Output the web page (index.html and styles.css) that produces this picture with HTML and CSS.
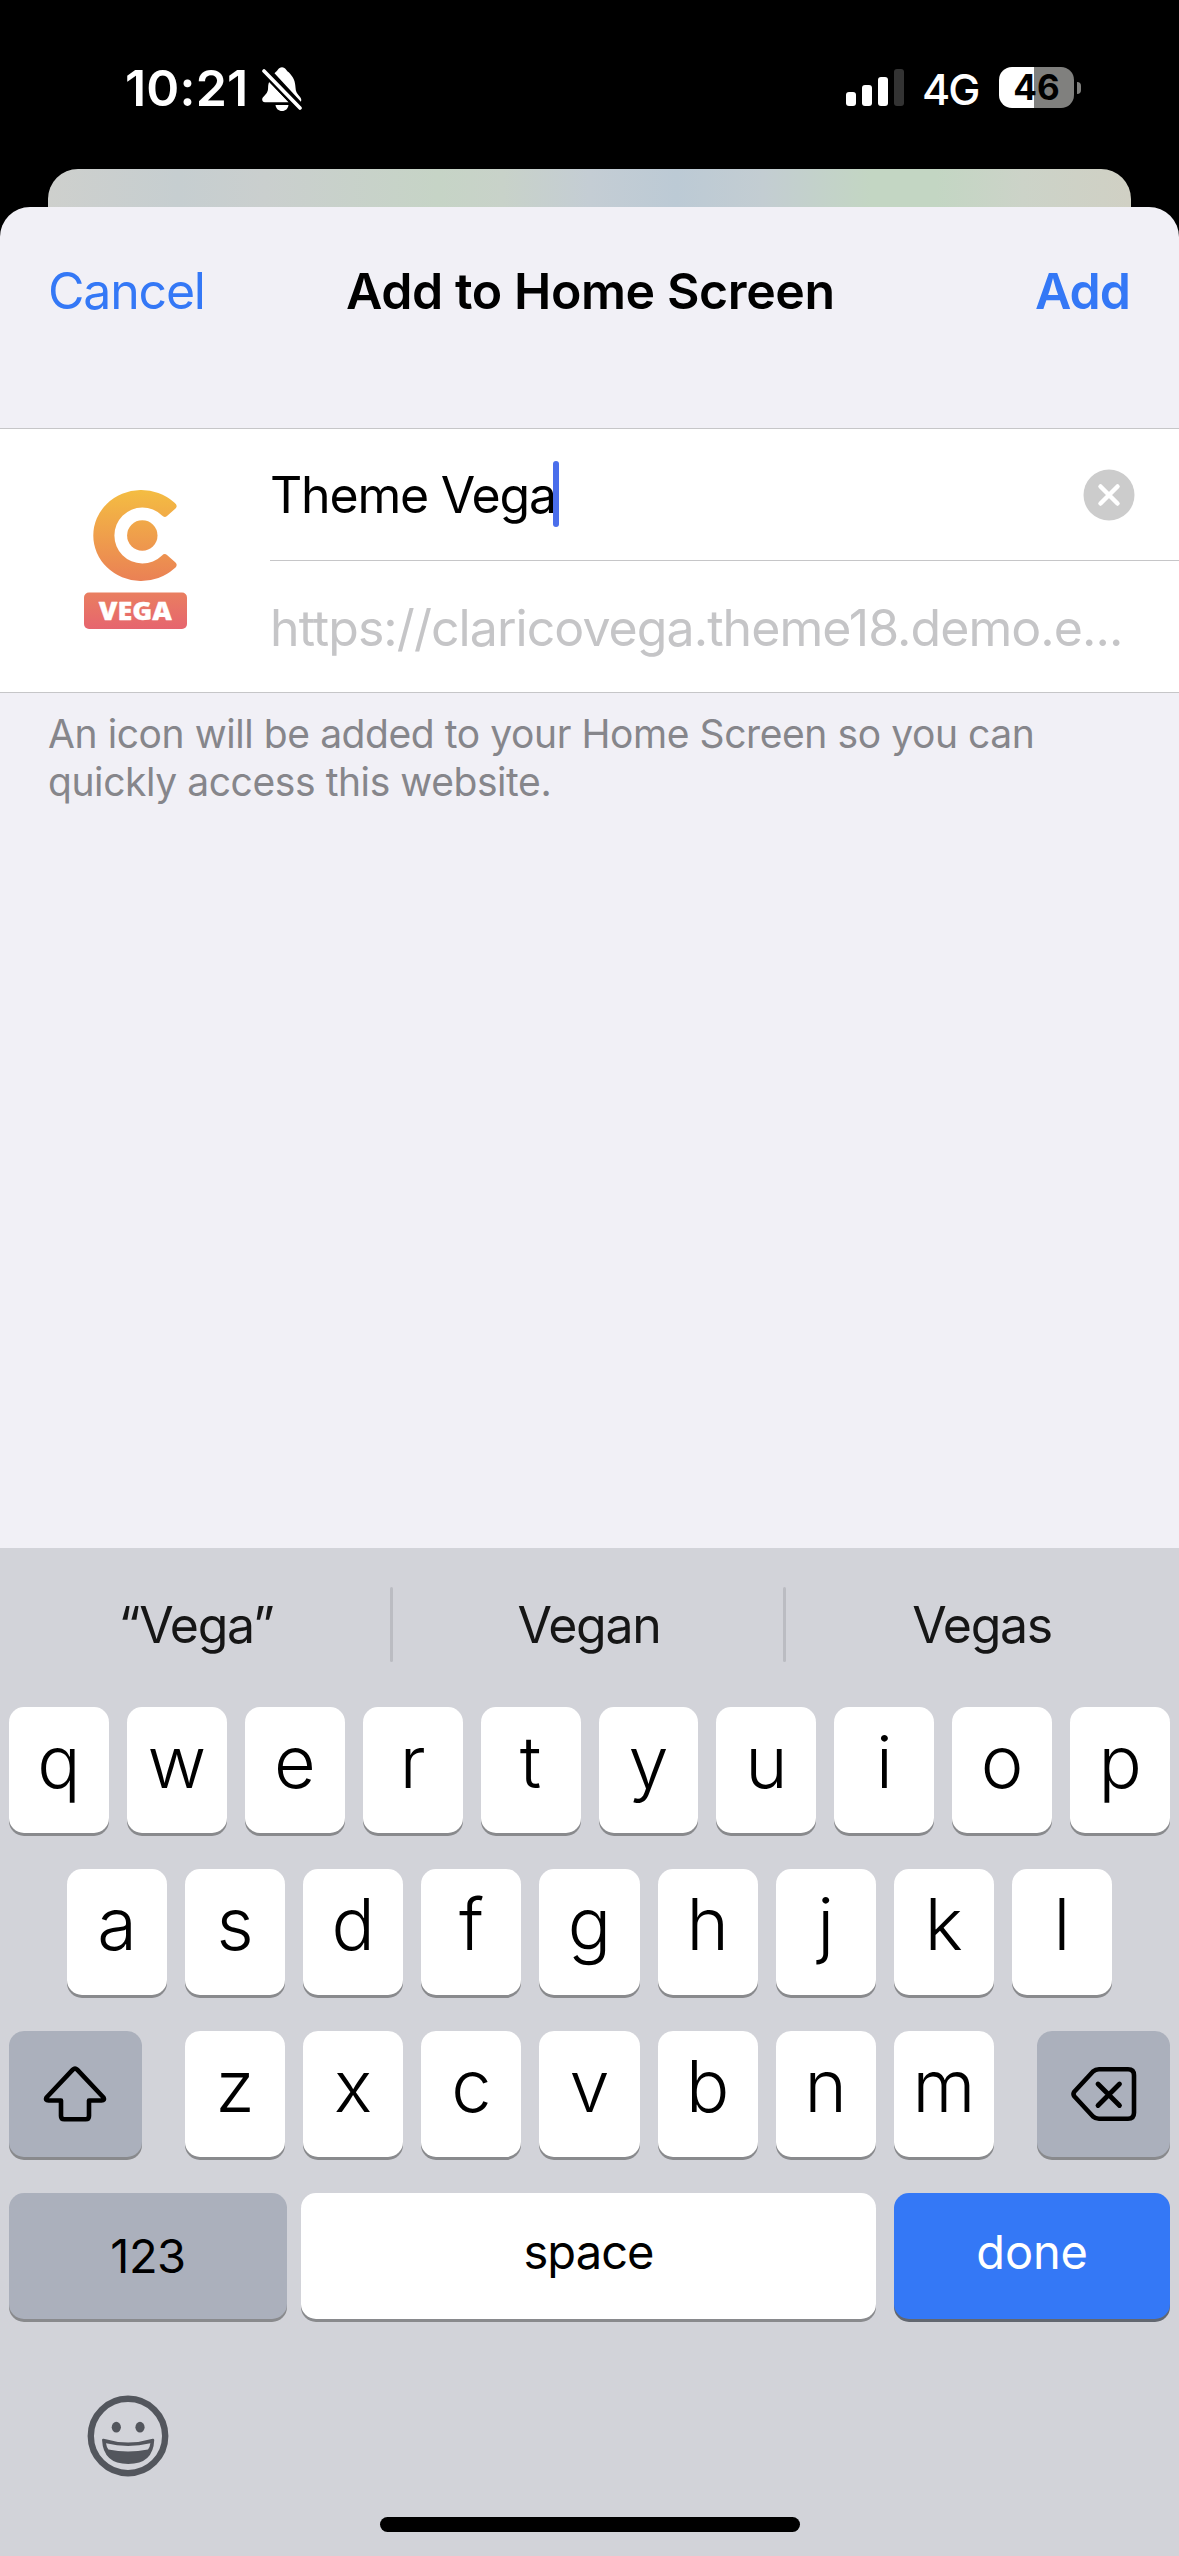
FILE: index.html
```html
<!DOCTYPE html>
<html lang="en">
<head>
<meta charset="utf-8">
<title>Add to Home Screen</title>
<link rel="stylesheet" href="styles.css">
</head>
<body>
<div class="phone">
  <header class="status">
    <div class="status-left">
      <span class="time">10:21</span>
      <svg class="bell" viewBox="0 0 40 44" width="40" height="44">
        <path d="M12.500 6.200C14 4.500 14.800 4.600 15.800 2.800C17.600-.700 22.400-.700 24.200 2.800C25.200 4.600 26.200 4.500 28.500 7.300C31.700 11 33.200 14.500 33.500 20.500C33.700 24.500 34.800 26.400 37.200 28.900C39 30.800 39.800 32.200 38.900 34.800Z" fill="#fff"/>
        <path d="M7.300 14.800L26.600 35.200H3C.300 35.200-.700 32.200 1 30.200C4.500 26.500 6.100 25.100 6.100 20.500C6.200 18.200 6.400 16.600 7.300 14.800Z" fill="#fff"/>
        <path d="M13.500 38H26.500C26 41.800 23.500 44 20 44C16.500 44 14 41.800 13.500 38Z" fill="#fff"/>
        <path d="M2 4L38 41" stroke="#000" stroke-width="8"/>
        <path d="M2 4L38 41" stroke="#fff" stroke-width="3.600" stroke-linecap="round"/>
      </svg>
    </div>
    <div class="status-right">
      <div class="signal"><i class="bar b1"></i><i class="bar b2"></i><i class="bar b3"></i><i class="bar b4"></i></div>
      <span class="network">4G</span>
      <div class="battery"><span>46</span></div>
      <i class="nub"></i>
    </div>
  </header>
  <div class="back-card"></div>
  <main class="sheet">
    <nav class="nav">
      <span class="cancel">Cancel</span>
      <h1 class="title">Add to Home Screen</h1>
      <span class="add">Add</span>
    </nav>
    <section class="form">
      <div class="logo">
        <svg viewBox="0 0 104 142" width="104" height="142">
          <defs>
            <linearGradient id="c" gradientUnits="userSpaceOnUse" x1="0" y1="0" x2="0" y2="92"><stop offset="0" stop-color="#f4bd42"/><stop offset="1" stop-color="#ea8055"/></linearGradient>
            <linearGradient id="b" gradientUnits="userSpaceOnUse" x1="0" y1="103" x2="0" y2="140"><stop offset="0" stop-color="#e97e60"/><stop offset="1" stop-color="#e6646f"/></linearGradient>
          </defs>
          <path d="M90 12.200A48 45.500 0 1 0 90 78.800Q94.500 75.500 91.500 72.500L83 65Q80.500 63 78 65.500A28 28 0 1 1 78 25.500Q80.500 28 83 26L91.500 18.500Q94.500 15.500 90 12.200Z" fill="url(#c)"/>
          <circle cx="58.300" cy="45.500" r="15.200" fill="url(#c)"/>
          <rect x="0" y="102.500" width="103" height="36.500" rx="5" fill="url(#b)"/>
          <text class="logo-text" x="51.300" y="129.500" text-anchor="middle" textLength="73" lengthAdjust="spacingAndGlyphs">VEGA</text>
        </svg>
      </div>
      <div class="fields">
        <div class="field name"><span class="value">Theme Vega</span><i class="caret"></i>
          <svg class="clear" viewBox="0 0 52 52" width="52" height="52"><circle cx="26" cy="26" r="25.500" fill="#ccc"/><path d="M17.500 17.500L34.500 34.500M34.500 17.500L17.500 34.500" stroke="#fff" stroke-width="4.500" stroke-linecap="round"/></svg>
        </div>
        <div class="field url"><span class="link">https://claricovega.theme18.demo.e...</span></div>
      </div>
    </section>
    <p class="note">An icon will be added to your Home Screen so you can<br>quickly access this website.</p>
  </main>
  <section class="keyboard">
    <div class="suggest"><span>“Vega”</span><i></i><span>Vegan</span><i></i><span>Vegas</span></div>
    <div class="row"><b>q</b><b>w</b><b>e</b><b>r</b><b>t</b><b>y</b><b>u</b><b>i</b><b>o</b><b>p</b></div>
    <div class="row middle"><b>a</b><b>s</b><b>d</b><b>f</b><b>g</b><b>h</b><b>j</b><b>k</b><b>l</b></div>
    <div class="row third">
      <div class="key side shift"><svg viewBox="0 0 64 56" width="64" height="56"><path d="M29.800 3.700Q32 1.500 34.200 3.700L60.500 31.500Q62 34.500 58.500 34.500H46V50Q46 53.300 42.700 53.300H21.300Q18 53.300 18 50V34.500H5.500Q2 34.500 3.500 31.500Z" fill="none" stroke="#000" stroke-width="4.600" stroke-linejoin="round"/></svg></div>
      <div class="letters"><b>z</b><b>x</b><b>c</b><b>v</b><b>b</b><b>n</b><b>m</b></div>
      <div class="key side"><svg viewBox="0 0 66 56" width="66" height="56"><path d="M3.500 25.500L22 5.500Q24.500 3.300 28 3.300H57Q63 3.300 63 9.300V46.700Q63 52.700 57 52.700H28Q24.500 52.700 22 50.500L3.500 30.500Q1.500 28 3.500 25.500Z" fill="none" stroke="#000" stroke-width="4.600" stroke-linejoin="round"/><path d="M27 18L48.500 39.500M48.500 18L27 39.500" stroke="#000" stroke-width="4.800" stroke-linecap="round"/></svg></div>
    </div>
    <div class="row bottom"><div class="key num"><span>123</span></div><div class="key space"><span>space</span></div><div class="key done"><span>done</span></div></div>
    <svg class="emoji" viewBox="0 0 82 82" width="82" height="82"><circle cx="41" cy="41" r="37.200" fill="none" stroke="#53565d" stroke-width="6.400"/><ellipse cx="29.300" cy="32.200" rx="4.600" ry="5.400" fill="#53565d"/><ellipse cx="53" cy="32.200" rx="4.600" ry="5.400" fill="#53565d"/><path d="M16.300 45Q41 52.500 66 45Q65 67.800 41.200 67.800Q17.500 67.800 16.300 45Z" fill="#53565d" stroke="#53565d" stroke-width="2.500" stroke-linejoin="round"/><path d="M19 48.300Q41 53.500 63.400 48.300Q63 52 61 54.500Q41 58.500 21.400 54.500Q19.500 52 19 48.300Z" fill="#d2d3d9"/></svg>
    <div class="home"></div>
  </section>
</div>
</body>
</html>
```
FILE: styles.css
```css
* { box-sizing: border-box; }
body { margin: 0; background: #000; font-family: Inter, "Liberation Sans", sans-serif; }
.phone { width: 1179px; height: 2556px; overflow: hidden; display: flex; flex-direction: column; background: #000; }
.status { height: 169px; flex: none; display: flex; justify-content: space-between; padding: 67px 98px 0 125px; color: #fff; }
.status-left, .status-right { display: flex; align-items: flex-start; }
.time { font-size: 50px; line-height: 60px; font-weight: 600; width: 137px; margin-top: -9px; white-space: nowrap; letter-spacing: 0.200px; }
.signal { display: flex; align-items: flex-end; gap: 6px; height: 39px; margin-right: 18px; }
.bar { width: 10px; border-radius: 3px; background: #fff; }
.b1 { height: 14px; }
.b2 { height: 21px; }
.b3 { height: 29px; }
.b4 { height: 37px; background: #333; }
.network { font-size: 43px; line-height: 50px; font-weight: 500; width: 77px; margin-top: -3px; letter-spacing: -2px; }
.battery { width: 75px; height: 41px; border-radius: 13px; background: linear-gradient(90deg, #fff 35px, #80807e 35px); color: #000; font-size: 35px; line-height: 41px; font-weight: 700; text-align: center; letter-spacing: 0; }
.nub { width: 4px; height: 12px; margin: 15px 0 0 3px; border-radius: 0 4px 4px 0; background: #80807e; }
.back-card { height: 76px; flex: none; margin: 0 48px -38px; border-radius: 30px 30px 0 0; background: linear-gradient(90deg, #ced0cd 0, #c6ced0 12%, #cacfce 20%, #c6d4c6 36%, #c8d2c9 42%, #c4cdd4 50%, #bccad5 58%, #c3cdd2 66%, #c3d6c3 76%, #c3d6c3 82%, #ccd3c8 90%, #d0d0c4 100%); }
.sheet { height: 1341px; flex: none; border-radius: 30px 30px 0 0; background: #f1f0f6; position: relative; }
.nav { height: 221px; padding: 54px 49px 0 48px; display: flex; font-size: 50px; line-height: 60px; color: #3478f6; }
.cancel { width: 298px; flex: none; letter-spacing: -1.200px; }
.title { margin: 0; color: #000; font-size: 50px; font-weight: 600; line-height: 60px; white-space: nowrap; letter-spacing: -0.400px; }
.add { margin-left: auto; font-weight: 600; letter-spacing: -1px; }
.form { height: 265px; display: flex; background: #fff; border-top: 1px solid #c6c6c8; border-bottom: 1px solid #c6c6c8; }
.logo { width: 270px; padding: 61px 0 0 84px; }
.logo svg { display: block; }
.logo-text { font: 800 24.500px "Open Sans", sans-serif; fill: #fff; stroke: #fff; stroke-width: 0.300px; stroke-linejoin: round; }
.fields { flex: 1; }
.field { height: 132px; display: flex; align-items: center; font-size: 50px; line-height: 60px; white-space: nowrap; }
.name { border-bottom: 1px solid #c6c6c8; }
.value { width: 283px; letter-spacing: -1.200px; }
.caret { width: 6px; height: 66px; border-radius: 3px; background: #4a6eeb; margin-top: -2px; }
.clear { margin: 1px 44px 0 auto; }
.url { padding-top: 1px; }
.link { color: #c5c5c7; letter-spacing: -0.940px; }
.note { margin: 17px 48px; font-size: 39px; line-height: 48px; color: #86868b; white-space: nowrap; letter-spacing: -0.420px; }
.keyboard { height: 1008px; flex: none; background: #d2d3d9; display: flex; flex-direction: column; }
.suggest { height: 159px; flex: none; display: flex; align-items: flex-start; font-size: 50px; line-height: 60px; color: #161616; }
.suggest span { width: 390px; text-align: center; padding: 47px 0 0 2px; letter-spacing: -1.300px; }
.suggest i { width: 3px; height: 75px; margin-top: 39px; border-radius: 2px; background: #bbbcc2; }
.row { height: 126px; flex: none; display: flex; gap: 18px; padding: 0 9px; margin-bottom: 36px; }
.row b, .key { border-radius: 15px; background: #fff; box-shadow: 0 3px 0 #898a8d; color: #000; }
.row b { flex: 1; font-size: 72px; line-height: 87px; font-weight: 350; text-align: center; padding-top: 11px; }
.middle { padding: 0 67px; }
.third { gap: 43px; }
.letters { flex: 1; display: flex; gap: 18px; }
.key { flex: none; display: flex; align-items: center; justify-content: center; font-size: 47px; letter-spacing: -0.500px; }
.side { width: 133px; background: #abb0bc; }
.shift { padding-right: 2px; }
.bottom { gap: 0; }
.num { width: 278px; background: #abb0bc; margin-right: 14px; padding-bottom: 1px; }
.space { width: 575px; margin-right: 18px; letter-spacing: -0.900px; }
.space span, .done span { margin-top: -9px; }
.done { width: 276px; background: #3478f6; color: #fff; box-shadow: 0 3px 0 #626770; letter-spacing: -0.200px; }
.emoji { margin: 40px 0 0 87px; flex: none; }
.home { width: 420px; height: 15px; border-radius: 8px; background: #000; margin: 40px auto 0; flex: none; }
```
